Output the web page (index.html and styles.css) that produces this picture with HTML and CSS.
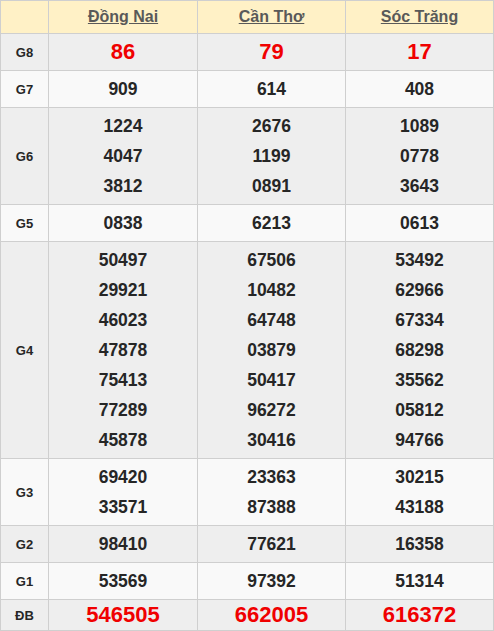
FILE: index.html
```html
<!DOCTYPE html>
<html lang="vi">
<head>
<meta charset="utf-8">
<link rel="stylesheet" href="styles.css">
</head>
<body>
<div class="board">
  <div class="cell head corner"></div>
  <div class="cell head"><a href="#">Đồng Nai</a></div>
  <div class="cell head"><a href="#">Cần Thơ</a></div>
  <div class="cell head"><a href="#">Sóc Trăng</a></div>

  <div class="cell lbl alt">G8</div>
  <div class="cell alt"><div class="n big">86</div></div>
  <div class="cell alt"><div class="n big">79</div></div>
  <div class="cell alt"><div class="n big">17</div></div>

  <div class="cell lbl">G7</div>
  <div class="cell"><div class="n">909</div></div>
  <div class="cell"><div class="n">614</div></div>
  <div class="cell"><div class="n">408</div></div>

  <div class="cell lbl alt">G6</div>
  <div class="cell alt"><div class="n">1224</div><div class="n">4047</div><div class="n">3812</div></div>
  <div class="cell alt"><div class="n">2676</div><div class="n">1199</div><div class="n">0891</div></div>
  <div class="cell alt"><div class="n">1089</div><div class="n">0778</div><div class="n">3643</div></div>

  <div class="cell lbl">G5</div>
  <div class="cell"><div class="n">0838</div></div>
  <div class="cell"><div class="n">6213</div></div>
  <div class="cell"><div class="n">0613</div></div>

  <div class="cell lbl alt">G4</div>
  <div class="cell alt"><div class="n">50497</div><div class="n">29921</div><div class="n">46023</div><div class="n">47878</div><div class="n">75413</div><div class="n">77289</div><div class="n">45878</div></div>
  <div class="cell alt"><div class="n">67506</div><div class="n">10482</div><div class="n">64748</div><div class="n">03879</div><div class="n">50417</div><div class="n">96272</div><div class="n">30416</div></div>
  <div class="cell alt"><div class="n">53492</div><div class="n">62966</div><div class="n">67334</div><div class="n">68298</div><div class="n">35562</div><div class="n">05812</div><div class="n">94766</div></div>

  <div class="cell lbl">G3</div>
  <div class="cell"><div class="n">69420</div><div class="n">33571</div></div>
  <div class="cell"><div class="n">23363</div><div class="n">87388</div></div>
  <div class="cell"><div class="n">30215</div><div class="n">43188</div></div>

  <div class="cell lbl alt">G2</div>
  <div class="cell alt"><div class="n">98410</div></div>
  <div class="cell alt"><div class="n">77621</div></div>
  <div class="cell alt"><div class="n">16358</div></div>

  <div class="cell lbl">G1</div>
  <div class="cell"><div class="n">53569</div></div>
  <div class="cell"><div class="n">97392</div></div>
  <div class="cell"><div class="n">51314</div></div>

  <div class="cell lbl alt last">ĐB</div>
  <div class="cell alt last"><div class="n big">546505</div></div>
  <div class="cell alt last"><div class="n big">662005</div></div>
  <div class="cell alt last"><div class="n big">616372</div></div>
</div>
</body>
</html>
```
FILE: styles.css
```css
html, body {
  margin: 0;
  padding: 0;
  background: #ffffff;
}
body {
  font-family: "Liberation Sans", Arial, sans-serif;
}
.board {
  display: grid;
  grid-template-columns: 47px 148px 147px 147px;
  gap: 1px;
  padding: 1px;
  width: 494px;
  box-sizing: border-box;
  background: #cfcfcf;
}
.cell {
  background: #f9f9f9;
  padding: 3px 0;
  display: flex;
  flex-direction: column;
  align-items: center;
  justify-content: center;
  color: #262626;
}
.cell.alt {
  background: #eeeeee;
}
.cell.head {
  background: #fff1c6;
  height: 32px;
  padding: 0;
  box-sizing: border-box;
}
.cell.head a {
  color: #595959;
  font-size: 16px;
  font-weight: bold;
  text-decoration: underline;
}
.cell.lbl {
  font-size: 13px;
  font-weight: bold;
}
.n {
  font-size: 17.5px;
  font-weight: bold;
  line-height: 30px;
}
.n.big {
  font-size: 22px;
  color: #f00000;
}
.cell.last {
  padding: 0;
  height: 30px;
  box-sizing: border-box;
}
```
